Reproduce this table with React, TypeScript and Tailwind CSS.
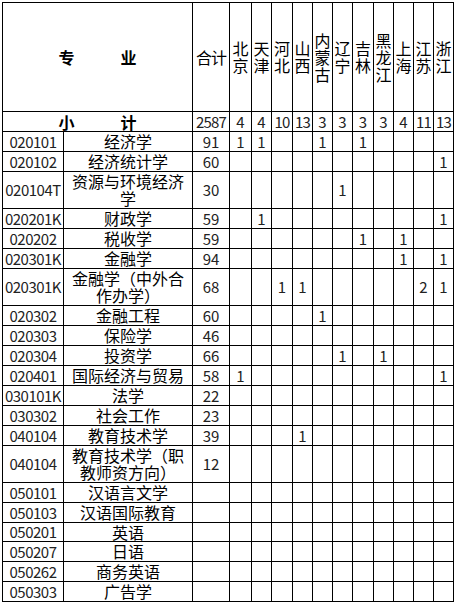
import React from "react";

const provinces = ["北京", "天津", "河北", "山西", "内蒙古", "辽宁", "吉林", "黑龙江", "上海", "江苏", "浙江"];
const totals = ["2587", "4", "4", "10", "13", "3", "3", "3", "3", "4", "11", "13"];

type Row = { code: string; name: string; total: string; vals: Record<number, string>; h: string };

const S = "h-[19px]";
const T = "h-[36px]";

const rows: Row[] = [
  { code: "020101", name: "经济学", total: "91", vals: { 0: "1", 1: "1", 4: "1", 6: "1" }, h: S },
  { code: "020102", name: "经济统计学", total: "60", vals: { 10: "1" }, h: S },
  { code: "020104T", name: "资源与环境经济学", total: "30", vals: { 5: "1" }, h: T },
  { code: "020201K", name: "财政学", total: "59", vals: { 1: "1", 10: "1" }, h: S },
  { code: "020202", name: "税收学", total: "59", vals: { 6: "1", 8: "1" }, h: S },
  { code: "020301K", name: "金融学", total: "94", vals: { 8: "1", 10: "1" }, h: S },
  { code: "020301K", name: "金融学（中外合作办学）", total: "68", vals: { 2: "1", 3: "1", 9: "2", 10: "1" }, h: T },
  { code: "020302", name: "金融工程", total: "60", vals: { 4: "1" }, h: S },
  { code: "020303", name: "保险学", total: "46", vals: {}, h: S },
  { code: "020304", name: "投资学", total: "66", vals: { 5: "1", 7: "1" }, h: S },
  { code: "020401", name: "国际经济与贸易", total: "58", vals: { 0: "1", 10: "1" }, h: S },
  { code: "030101K", name: "法学", total: "22", vals: {}, h: S },
  { code: "030302", name: "社会工作", total: "23", vals: {}, h: S },
  { code: "040104", name: "教育技术学", total: "39", vals: { 3: "1" }, h: S },
  { code: "040104", name: "教育技术学（职教师资方向）", total: "12", vals: {}, h: T },
  { code: "050101", name: "汉语言文学", total: "", vals: {}, h: S },
  { code: "050103", name: "汉语国际教育", total: "", vals: {}, h: S },
  { code: "050201", name: "英语", total: "", vals: {}, h: "h-[18px]" },
  { code: "050207", name: "日语", total: "", vals: {}, h: S },
  { code: "050262", name: "商务英语", total: "", vals: {}, h: S },
  { code: "050303", name: "广告学", total: "", vals: {}, h: S },
];

const cell = "bg-white flex items-center justify-center text-center";
const num = "text-[15px] leading-[18px] text-[#222]";

export default function App() {
  return (
    <div
      className="bg-white w-[454px] h-[602px] pl-[2px] pt-[2px] text-black text-[16px] overflow-hidden"
      style={{ fontFamily: '"Noto Sans CJK SC", "Noto Sans", sans-serif' }}
    >
      <div className="inline-grid grid-cols-[60px_128px_36px_21px_19px_20px_19px_19px_19px_20px_19px_19px_19px_19px] gap-px bg-black p-px">
        {/* header */}
        <div className={`${cell} col-span-2 h-[108px] font-bold gap-[46px]`}>
          <span>专</span>
          <span>业</span>
        </div>
        <div className={`${cell} h-[108px] tracking-[-1px]`}>合计</div>
        {provinces.map((p, i) => (
          <div key={i} className={`${cell} h-[108px] flex-col leading-[17px]`}>
            {p.split("").map((c, j) => (
              <span key={j}>{c}</span>
            ))}
          </div>
        ))}

        {/* subtotal */}
        <div className={`${cell} col-span-2 h-[19px] font-bold gap-[46px] leading-[18px]`}>
          <span>小</span>
          <span>计</span>
        </div>
        {totals.map((t, i) => (
          <div key={i} className={`${cell} h-[19px] ${num} ${t.length > 1 ? "tracking-[-0.8px]" : ""}`}>
            {t}
          </div>
        ))}

        {rows.map((r, ri) => (
          <React.Fragment key={ri}>
            <div className={`${cell} ${r.h} ${num} tracking-[-0.5px] whitespace-nowrap`}>
              {r.code}
            </div>
            <div className={`${cell} ${r.h} px-[4px] leading-[17px]`}>
              {r.name}
            </div>
            <div className={`${cell} ${r.h} ${num}`}>{r.total}</div>
            {provinces.map((_, pi) => (
              <div key={pi} className={`${cell} ${r.h} ${num}`}>
                {r.vals[pi] ?? ""}
              </div>
            ))}
          </React.Fragment>
        ))}
      </div>
    </div>
  );
}
